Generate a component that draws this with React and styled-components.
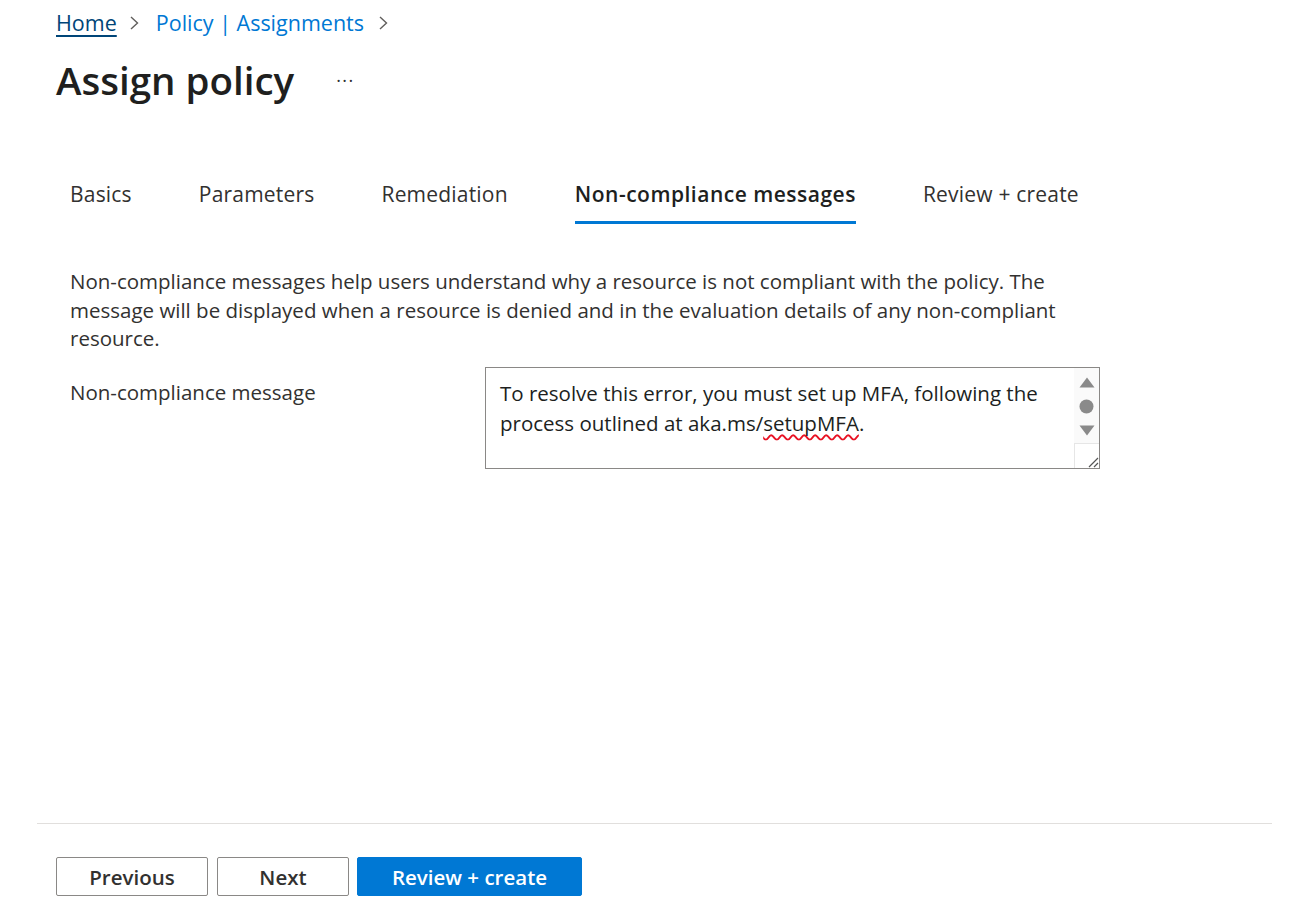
import React from "react";
import styled, { createGlobalStyle } from "styled-components";

const GlobalStyle = createGlobalStyle`
  html, body {
    margin: 0;
    padding: 0;
    background: #fff;
  }
  body {
    font-family: "Open Sans", "Noto Sans", sans-serif;
    color: #323130;
  }
`;

const Page = styled.div`
  height: 100vh;
  display: flex;
  flex-direction: column;
  box-sizing: border-box;
`;

const Main = styled.div`
  flex: 1;
`;

const Header = styled.div`
  padding: 9px 56px 0;
`;

const Breadcrumb = styled.nav`
  display: flex;
  align-items: center;
  font-size: 21.5px;
  line-height: 28px;
`;

const Crumb = styled.a`
  color: ${(p) => (p.$current ? "#004578" : "#0078d4")};
  text-decoration: ${(p) => (p.$current ? "underline" : "none")};
  text-underline-offset: 4px;
`;

const Chevron = styled.span`
  display: inline-flex;
  margin: 0 16px 0 ${(p) => (p.$last ? 13 : 11)}px;
`;

const TitleRow = styled.div`
  display: flex;
  align-items: center;
  margin-top: 19px;
`;

const Title = styled.h1`
  margin: 0;
  font-size: 38.5px;
  line-height: 48px;
  font-weight: 600;
  color: #201f1e;
`;

const More = styled.span`
  margin-left: 42px;
  font-size: 18px;
  color: #323130;
  letter-spacing: 1.5px;
`;

const Tabs = styled.div`
  display: flex;
  gap: 67px;
  margin: 76px 0 0 70px;
`;

const Tab = styled.div`
  font-size: 21px;
  line-height: 28px;
  padding-bottom: 13px;
  border-bottom: 3px solid ${(p) => (p.$active ? "#0078d4" : "transparent")};
  font-weight: ${(p) => (p.$active ? 600 : 400)};
  letter-spacing: ${(p) => (p.$active ? 0.5 : 0.2)}px;
  color: ${(p) => (p.$active ? "#201f1e" : "#323130")};
`;

const Content = styled.div`
  padding: 0 0 0 70px;
`;

const Description = styled.p`
  margin: 43px 0 0;
  width: 1000px;
  font-size: 20.5px;
  line-height: 28.5px;
`;

const FormRow = styled.div`
  display: flex;
  margin-top: 14px;
`;

const Label = styled.div`
  width: 415px;
  padding-top: 11px;
  font-size: 20.5px;
  line-height: 28px;
`;

const TextBox = styled.div`
  width: 615px;
  height: 102px;
  box-sizing: border-box;
  border: 1px solid #8a8886;
  display: flex;
`;

const TextValue = styled.div`
  flex: 1;
  padding: 10px 14px 0;
  font-size: 20.5px;
  line-height: 30px;
  color: #201f1e;
`;

const Misspelled = styled.span`
  text-decoration: underline wavy #e81123;
  text-decoration-thickness: 1.5px;
  text-decoration-skip-ink: none;
  text-underline-offset: 3px;
`;

const ScrollRail = styled.div`
  width: 25px;
  display: flex;
  flex-direction: column;
  align-items: center;
  background: #fafafa;
`;

const ScrollButtons = styled.div`
  flex: 1;
  display: flex;
  flex-direction: column;
  align-items: center;
  gap: 11px;
  padding-top: 9px;
`;

const Resizer = styled.div`
  width: 25px;
  height: 25px;
  box-sizing: border-box;
  border-top: 1px solid #e6e6e6;
  border-left: 1px solid #e6e6e6;
  display: flex;
  align-items: flex-end;
  justify-content: flex-end;
  background: #fff;
`;

const Footer = styled.div`
  margin: 0 22px 0 37px;
  border-top: 1px solid #e1dfdd;
  padding: 33px 0 19px 19px;
  display: flex;
`;

const Button = styled.button`
  height: 39px;
  width: ${(p) => p.$width}px;
  margin-right: ${(p) => p.$gap || 0}px;
  box-sizing: border-box;
  border-radius: 2px;
  border: 1px solid ${(p) => (p.$primary ? "#0078d4" : "#8a8886")};
  background: ${(p) => (p.$primary ? "#0078d4" : "#fff")};
  color: ${(p) => (p.$primary ? "#fff" : "#323130")};
  font-family: "Open Sans", "Noto Sans", sans-serif;
  font-size: 20.5px;
  font-weight: 600;
  padding: 0;
`;

const ChevronIcon = () => (
  <svg width="12" height="16" viewBox="0 0 12 16">
    <path d="M3 2 L9.5 8 L3 14" fill="none" stroke="#605e5c" strokeWidth="1.4" />
  </svg>
);

const tabs = [
  "Basics",
  "Parameters",
  "Remediation",
  "Non-compliance messages",
  "Review + create",
];

export default function App() {
  return (
    <>
      <GlobalStyle />
      <Page>
        <Main>
          <Header>
            <Breadcrumb>
              <Crumb $current>Home</Crumb>
              <Chevron>
                <ChevronIcon />
              </Chevron>
              <Crumb>Policy | Assignments</Crumb>
              <Chevron $last>
                <ChevronIcon />
              </Chevron>
            </Breadcrumb>
            <TitleRow>
              <Title>Assign policy</Title>
              <More>···</More>
            </TitleRow>
          </Header>

          <Tabs>
            {tabs.map((t) => (
              <Tab key={t} $active={t === "Non-compliance messages"}>
                {t}
              </Tab>
            ))}
          </Tabs>

          <Content>
            <Description>
              Non-compliance messages help users understand why a resource is not
              compliant with the policy. The message will be displayed when a
              resource is denied and in the evaluation details of any
              non-compliant resource.
            </Description>
            <FormRow>
              <Label>Non-compliance message</Label>
              <TextBox>
                <TextValue>
                  To resolve this error, you must set up MFA, following the
                  process outlined at aka.ms/<Misspelled>setupMFA</Misspelled>.
                </TextValue>
                <ScrollRail>
                  <ScrollButtons>
                    <svg width="16" height="11" viewBox="0 0 16 11">
                      <path d="M8 0.5 L15.5 10.5 L0.5 10.5 Z" fill="#8a8a8a" />
                    </svg>
                    <svg width="15" height="15" viewBox="0 0 15 15">
                      <circle cx="7.5" cy="7.5" r="7" fill="#8a8a8a" />
                    </svg>
                    <svg width="16" height="11" viewBox="0 0 16 11">
                      <path d="M0.5 0.5 L15.5 0.5 L8 10.5 Z" fill="#8a8a8a" />
                    </svg>
                  </ScrollButtons>
                  <Resizer>
                    <svg width="14" height="14" viewBox="0 0 14 14">
                      <path d="M4 13 L13 4 M9 13 L13 9" stroke="#555" strokeWidth="1.2" />
                    </svg>
                  </Resizer>
                </ScrollRail>
              </TextBox>
            </FormRow>
          </Content>
        </Main>

        <Footer>
          <Button $width={152} $gap={9}>Previous</Button>
          <Button $width={132} $gap={8}>Next</Button>
          <Button $width={225} $primary>Review + create</Button>
        </Footer>
      </Page>
    </>
  );
}
